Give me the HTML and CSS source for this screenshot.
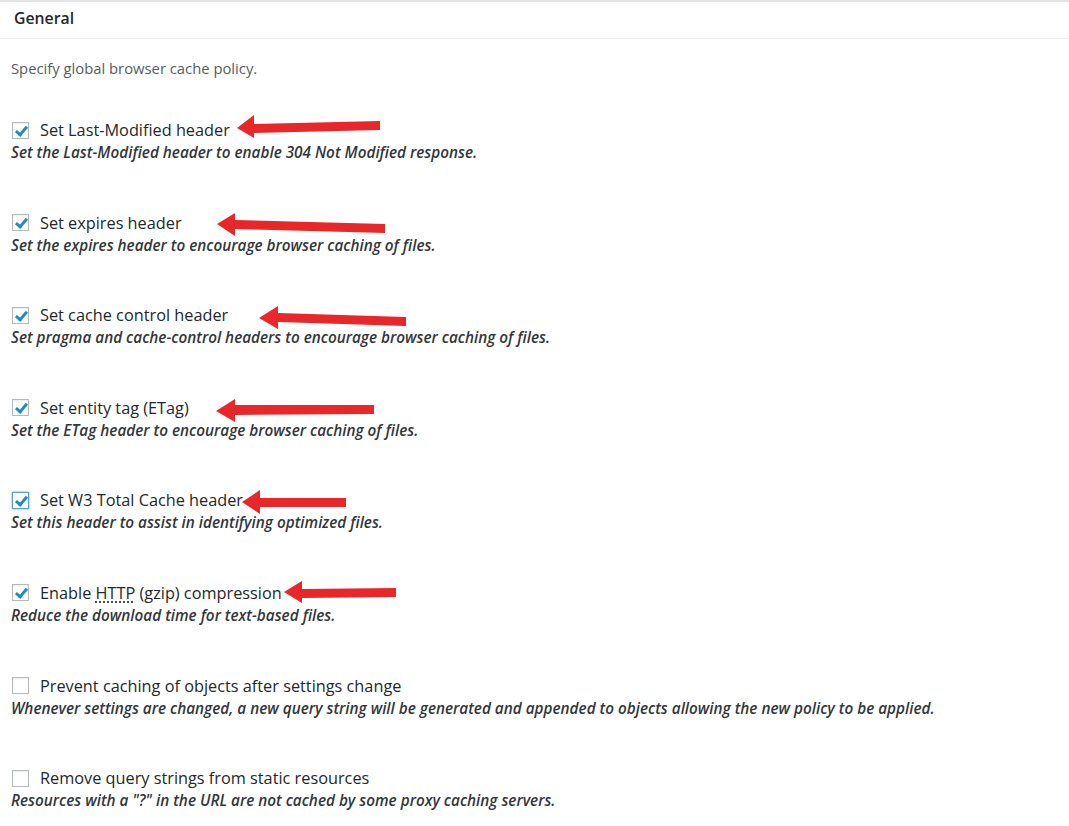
FILE: index.html
```html
<!DOCTYPE html>
<html lang="en">
<head>
<meta charset="utf-8">
<title>General</title>
<link rel="stylesheet" href="styles.css">
</head>
<body>
<div class="page">
  <div class="box-header">General</div>
  <p class="intro">Specify global browser cache policy.</p>
  <ul class="options">
    <li class="option">
      <label class="label"><span class="cb checked"></span><span class="text">Set Last-Modified header</span></label>
      <p class="desc">Set the Last-Modified header to enable 304 Not Modified response.</p>
    </li>
    <li class="option">
      <label class="label"><span class="cb checked"></span><span class="text">Set expires header</span></label>
      <p class="desc">Set the expires header to encourage browser caching of files.</p>
    </li>
    <li class="option">
      <label class="label"><span class="cb checked"></span><span class="text">Set cache control header</span></label>
      <p class="desc">Set pragma and cache-control headers to encourage browser caching of files.</p>
    </li>
    <li class="option">
      <label class="label"><span class="cb checked"></span><span class="text">Set entity tag (ETag)</span></label>
      <p class="desc">Set the ETag header to encourage browser caching of files.</p>
    </li>
    <li class="option">
      <label class="label"><span class="cb checked focus"></span><span class="text">Set W3 Total Cache header</span></label>
      <p class="desc">Set this header to assist in identifying optimized files.</p>
    </li>
    <li class="option">
      <label class="label"><span class="cb checked"></span><span class="text">Enable <abbr class="abbr">HTTP</abbr> (gzip) compression</span></label>
      <p class="desc">Reduce the download time for text-based files.</p>
    </li>
    <li class="option">
      <label class="label"><span class="cb"></span><span class="text">Prevent caching of objects after settings change</span></label>
      <p class="desc">Whenever settings are changed, a new query string will be generated and appended to objects allowing the new policy to be applied.</p>
    </li>
    <li class="option">
      <label class="label"><span class="cb"></span><span class="text">Remove query strings from static resources</span></label>
      <p class="desc">Resources with a "?" in the URL are not cached by some proxy caching servers.</p>
    </li>
  </ul>
  <svg class="arrows" width="1069" height="826" viewBox="0 0 1069 826" aria-hidden="true">
    <g fill="#e8272b">
      <polygon points="237,128 254,115 254,124 380,121 380,130 254,133 254,138"/>
      <polygon points="217,224 235,213 235,220 385,224 385,233 235,229 235,236"/>
      <polygon points="259,318 278,306 278,313 406,317 406,326 278,322 278,329"/>
      <polygon points="216,411 235,399 235,405 374,405 374,414 235,415 235,422"/>
      <polygon points="242,502 260,490 260,498 346,498 346,507 260,507 260,514"/>
      <polygon points="284,592 302,581 302,589 396,588 396,597 302,598 302,603"/>
    </g>
  </svg>
</div>
</body>
</html>
```
FILE: styles.css
```css
html, body {
  margin: 0;
  padding: 0;
  background: #ffffff;
}
body {
  font-family: "Open Sans", "Noto Sans", "Liberation Sans", sans-serif;
  color: #23282d;
}
.page {
  position: relative;
  width: 1069px;
  height: 826px;
  overflow: hidden;
}
.box-header {
  border-top: 2px solid #e2e4e7;
  border-bottom: 1px solid #eeeeee;
  height: 36px;
  line-height: 32px;
  padding-left: 14px;
  font-size: 15.8px;
  font-weight: 600;
  color: #23282d;
}
.intro {
  margin: 0;
  padding: 19px 0 0 11px;
  font-size: 14.8px;
  line-height: 20px;
  color: #555d66;
}
.options {
  list-style: none;
  margin: 0;
  padding: 41px 0 0 11px;
  display: flex;
  flex-direction: column;
  gap: 48.6px;
}
.option {
  display: flex;
  flex-direction: column;
}
.label {
  display: flex;
  align-items: center;
  height: 22px;
  line-height: 22px;
  color: #23282d;
}
.text {
  font-size: 16.3px;
  white-space: nowrap;
}
.cb {
  box-sizing: border-box;
  width: 17px;
  height: 17px;
  margin-left: 1px;
  margin-right: 11px;
  border: 1px solid #b4b9be;
  background: #ffffff;
  box-shadow: inset 0 1px 2px rgba(0,0,0,0.08);
  position: relative;
  flex: none;
}
.cb.checked::after {
  content: "";
  position: absolute;
  left: 5px;
  top: 1px;
  width: 4px;
  height: 9px;
  border-right: 3px solid #1e8cbe;
  border-bottom: 3px solid #1e8cbe;
  transform: rotate(40deg);
}
.cb.focus {
  border-color: #5b9dd9;
  box-shadow: 0 0 2px rgba(30,140,190,0.8);
}
.abbr {
  text-decoration: underline dotted #23282d;
  text-underline-offset: 3px;
}
.desc {
  margin: 0;
  font-size: 15.3px;
  line-height: 22px;
  font-style: italic;
  font-weight: 600;
  color: #32373c;
  white-space: nowrap;
}
.arrows {
  position: absolute;
  left: 0;
  top: 0;
  pointer-events: none;
}
```
